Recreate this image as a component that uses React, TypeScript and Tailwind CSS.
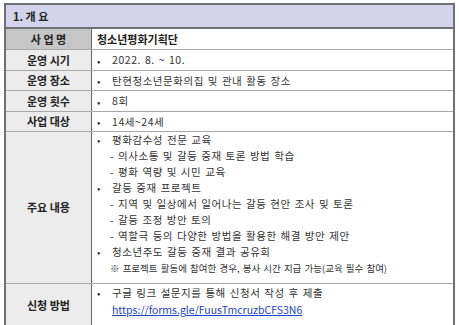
import React from "react";

const font = { fontFamily: '"Noto Sans CJK KR", "Noto Sans", sans-serif' };

function Row({
  label,
  labelBg = "bg-[#ececec]",
  children,
  h,
  last = false,
  top = false,
}: {
  label: string;
  labelBg?: string;
  children: React.ReactNode;
  h: string;
  last?: boolean;
  top?: boolean;
}) {
  return (
    <div className={`flex ${last ? "" : "border-b border-[#a8a8a8]"} ${h}`}>
      <div
        className={`w-[86px] shrink-0 ${labelBg} border-r border-[#666] flex items-center justify-center font-bold text-[11px] text-[#222]`}
      >
        {label}
      </div>
      <div
        className={`flex-1 flex ${top ? "items-start" : "items-center"} pl-[5px] text-[10.5px] text-[#333] tracking-[0.55px] [word-spacing:1px]`}
      >
        {children}
      </div>
    </div>
  );
}

function Bullet({ children }: { children: React.ReactNode }) {
  return (
    <div className="flex items-center">
      <span className="w-[15px] text-[10px]">•</span>
      <span>{children}</span>
    </div>
  );
}

export default function App() {
  return (
    <div className="bg-white w-[459px] h-[325px] overflow-hidden" style={font}>
      <div className="ml-[4px] mt-[3px] w-[451px] border-2 border-b-0 border-[#707070]">
        <div className="h-[24px] bg-[#d3d3eb] border-b-2 border-[#707070] flex items-center pl-[7px] font-bold text-[11px] text-[#222]">
          1. 개 요
        </div>
        <Row label="사 업 명" labelBg="bg-[#c6c6c6]" h="h-[21px]">
          <span className="font-bold text-[11px] text-[#222] tracking-normal">청소년평화기획단</span>
        </Row>
        <Row label="운영 시기" h="h-[21px]">
          <Bullet>2022. 8. ~ 10.</Bullet>
        </Row>
        <Row label="운영 장소" h="h-[20px]">
          <Bullet>탄현청소년문화의집 및 관내 활동 장소</Bullet>
        </Row>
        <Row label="운영 횟수" h="h-[21px]">
          <Bullet>8회</Bullet>
        </Row>
        <Row label="사업 대상" h="h-[20px]">
          <Bullet>14세~24세</Bullet>
        </Row>
        <Row label="주요 내용" h="h-[152px]" top>
          <div className="flex flex-col leading-[16px]">
            <Bullet>평화감수성 전문 교육</Bullet>
            <div className="pl-[13px]">- 의사소통 및 갈등 중재 토론 방법 학습</div>
            <div className="pl-[13px]">- 평화 역량 및 시민 교육</div>
            <Bullet>갈등 중재 프로젝트</Bullet>
            <div className="pl-[13px]">- 지역 및 일상에서 일어나는 갈등 현안 조사 및 토론</div>
            <div className="pl-[13px]">- 갈등 조정 방안 토의</div>
            <div className="pl-[13px]">- 역할극 등의 다양한 방법을 활용한 해결 방안 제안</div>
            <Bullet>청소년주도 갈등 중재 결과 공유회</Bullet>
            <div className="pl-[13px] text-[9.5px] tracking-normal">
              ※ 프로젝트 활동에 참여한 경우, 봉사 시간 지급 가능(교육 필수 참여)
            </div>
          </div>
        </Row>
        <Row label="신청 방법" h="h-[42px]" last top>
          <div className="flex flex-col leading-[17px]">
            <Bullet>구글 링크 설문지를 통해 신청서 작성 후 제출</Bullet>
            <a className="pl-[15px] text-[#1a44c8] underline tracking-normal [word-spacing:0px]">
              https://forms.gle/FuusTmcruzbCFS3N6
            </a>
          </div>
        </Row>
      </div>
    </div>
  );
}
